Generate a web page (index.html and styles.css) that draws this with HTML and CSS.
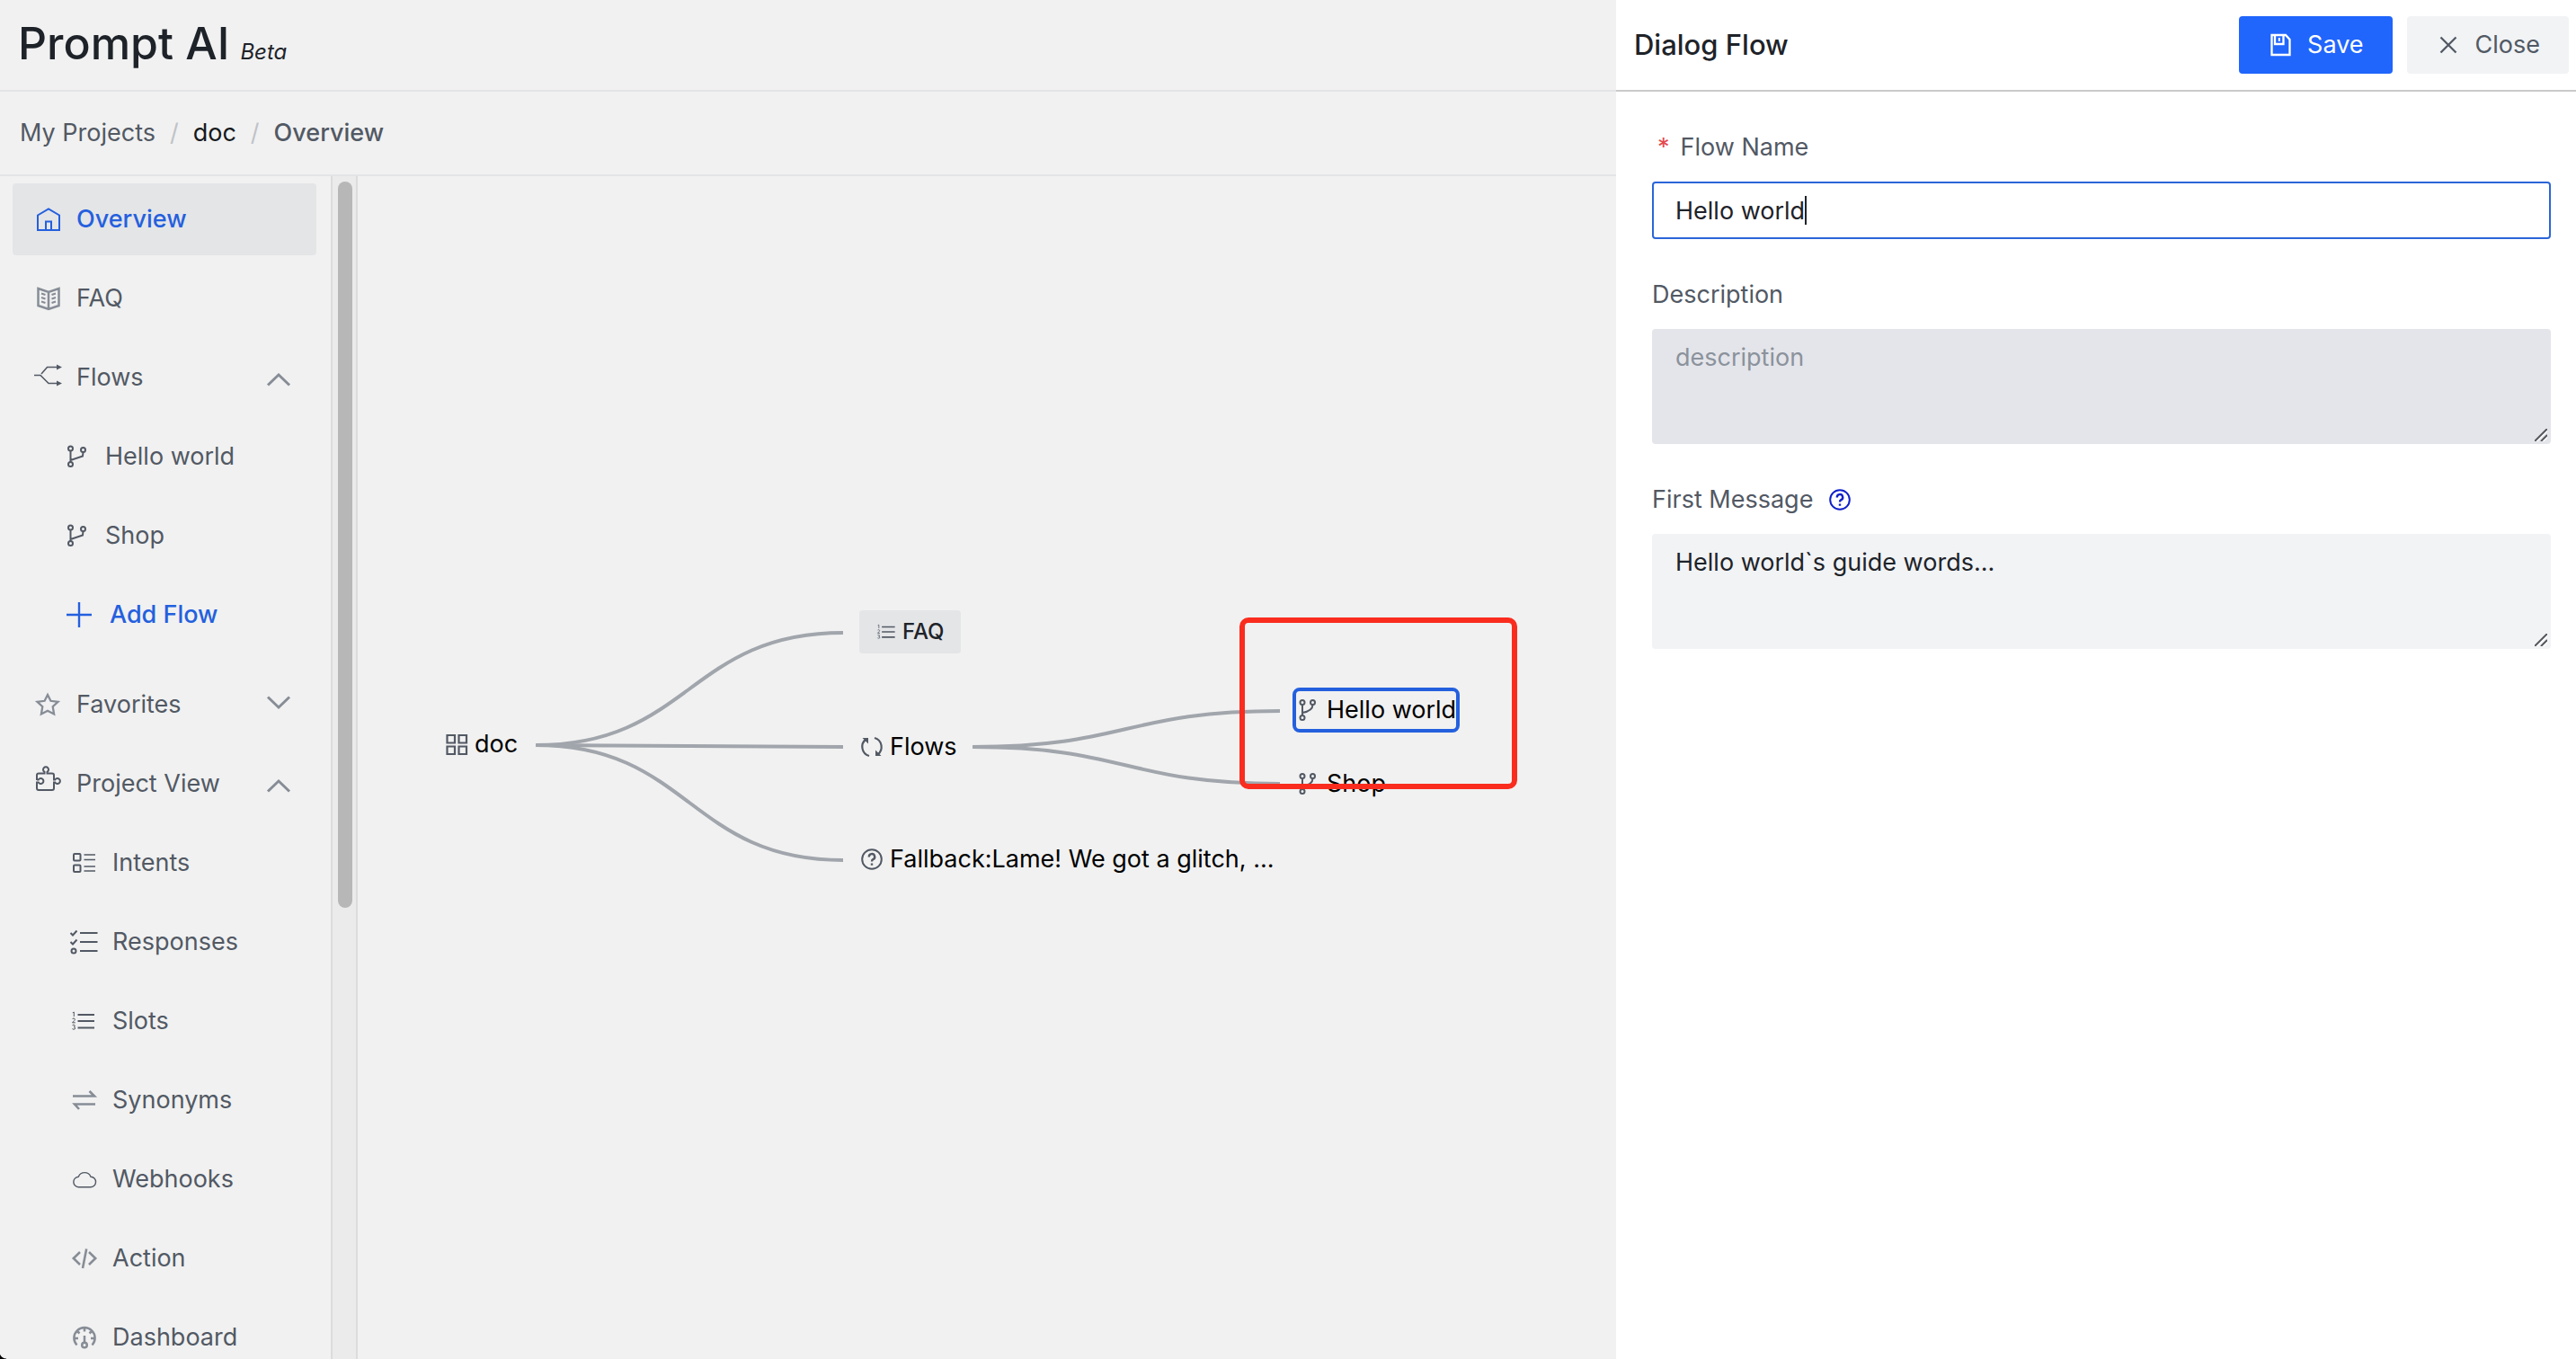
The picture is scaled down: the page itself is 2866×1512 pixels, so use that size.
FILE: index.html
```html
<!DOCTYPE html>
<html lang="en">
<head>
<meta charset="utf-8">
<title>Prompt AI - Overview</title>
<link rel="stylesheet" href="styles.css">
</head>
<body>
<svg class="sprite" aria-hidden="true">
  <symbol id="i-home" viewBox="0 0 28 28"><path d="M2 9.500 14 2.500 26 9.500V26H2Z M11 26V16.500h6V26"/></symbol>
  <symbol id="i-book" viewBox="0 0 28 28"><path stroke-width="2.500" d="M2.500 3 14 7 25.500 3V22L14 26 2.500 22Z M14 7V26"/><path stroke-width="2.200" d="M6 8.500l4.500 1.500 M6 13l4.500 1.500 M6 17.500l4.500 1.500 M22 8.500l-4.500 1.500 M22 13l-4.500 1.500 M22 17.500l-4.500 1.500"/></symbol>
  <symbol id="i-split" viewBox="0 0 28 28"><path stroke-width="1.600" d="M-2 11.500H5L14 20.500H23 M6 10 12.500 2.500H23"/><path class="solid" d="M23-.5 29 2.500 23 5.500Z M23 17.500 29 20.500 23 23.500Z"/></symbol>
  <symbol id="i-branch" viewBox="0 0 28 28"><circle cx="6.500" cy="5" r="2.500"/><circle cx="20.500" cy="6.500" r="2.500"/><circle cx="6.500" cy="22.500" r="2.500"/><path d="M6.500 7.500V20 M6.500 18 20 13.500 20.500 9"/></symbol>
  <symbol id="i-plus" viewBox="0 0 28 28"><path stroke-width="2.400" d="M14 0V28 M0 14H28"/></symbol>
  <symbol id="i-star" viewBox="0 0 28 28"><path stroke-width="2.300" d="m13 3 3.400 6.800 8.100 1-5.800 5.300 1.400 8.400L13 20.700 5.900 24.500l1.400-8.400L1.500 10.800l8.100-1Z"/></symbol>
  <symbol id="i-puzzle" viewBox="0 0 28 28"><path d="M1 10V4.500Q1 2.500 3 2.500H9.500V.8A3 3 0 1 1 12.500.8V2.500H18Q20 2.500 20 4.500V9.500H21.300A3 3 0 1 1 21.300 12.500H20V19Q20 21 18 21H3Q1 21 1 19V12.500H2.800A3 3 0 1 0 2.800 9.500H1"/></symbol>
  <symbol id="i-blocks" viewBox="0 0 28 28"><rect x="2" y="4" width="7.500" height="7.500" rx="1"/><rect x="2" y="16.500" width="7.500" height="7.500" rx="1"/><path stroke-width="1.600" d="M13.500 5H26 M13.500 10.500H26 M13.500 18H26 M13.500 23H26"/></symbol>
  <symbol id="i-checks" viewBox="0 0 28 28"><path d="M-1.500 4 1 6.500 5.500 1.500 M-1.500 14 1 16.500 5.500 11.500 M9 4H28.500 M9 14H28.500 M9 24H28.500"/><circle cx="2" cy="24" r="2.500"/></symbol>
  <symbol id="i-numbers" viewBox="0 0 28 28"><path d="M6.500 7H25 M6.500 14H25 M6.500 21.500H25"/><path class="fine" d="M.8 4.800 2.300 4V9 M.5 11.800Q.8 11 2 11T3.400 12.300Q3.400 13 .5 15.800H3.800 M.5 18.800Q.8 18.200 2 18.200T3.300 19.300 2 20.500Q3.600 20.500 3.600 21.900T2 23.200.5 22.500"/></symbol>
  <symbol id="i-swap" viewBox="0 0 28 28"><path stroke-width="2.600" d="M1 9.500H25L19.500 4 M26 18.500H3L8 24"/></symbol>
  <symbol id="i-cloud" viewBox="0 0 28 28"><path stroke-width="1.400" d="M8 22.800A5.800 5.800 0 0 1 7.300 11.200 7.400 7.400 0 0 1 21 11.200 5.800 5.800 0 0 1 20.500 22.800Z"/></symbol>
  <symbol id="i-code" viewBox="0 0 28 28"><path stroke-width="2.600" d="M9 7 1.800 14 9 21 M19 7 26.200 14 19 21 M16.200 3.500 12 25"/></symbol>
  <symbol id="i-gauge" viewBox="0 0 28 28"><path stroke-width="2.500" d="M5.500 22.500A11.600 11.600 0 1 1 22.500 22.500 M14 2.500V7.500 M5.500 6.500 8.500 9.500 M22.500 6.500 19.500 9.500 M2.500 15H7 M21 15H25.500 M14 12V20"/><circle stroke-width="2.500" cx="14" cy="22.500" r="2.800"/></symbol>
  <symbol id="i-up" viewBox="0 0 28 28"><path d="M2 22.500 14 11 26 22.500"/></symbol>
  <symbol id="i-down" viewBox="0 0 28 28"><path d="M2 5.500 14 17 26 5.500"/></symbol>
  <symbol id="i-save" viewBox="0 0 28 28"><path stroke-width="2.300" d="M4.500 3H20L24.500 8V25H4.500Z M8 3V13H17.500V3"/><path d="M12.800 6V10"/></symbol>
  <symbol id="i-close" viewBox="0 0 28 28"><path stroke-width="2.300" d="M5.500 5.500 22.500 22.500 M22.500 5.500 5.500 22.500"/></symbol>
  <symbol id="i-help" viewBox="0 0 28 28"><circle cx="14" cy="14" r="10.800"/><path stroke-width="2.400" d="M10.800 11.500A3.200 3.200 0 1 1 15.300 14.200Q14 14.800 14 16.500 M14 18.500V20.800"/></symbol>
  <symbol id="i-grid" viewBox="0 0 28 28"><path stroke-width="2.200" d="M3.500 4H12V12.500H3.500Z M16.500 4H25V12.500H16.500Z M3.500 16.500H12V25H3.500Z M16.500 16.500H25V25H16.500Z"/></symbol>
  <symbol id="i-cycle" viewBox="0 0 28 28"><path stroke-width="2.200" d="M11 24A10.500 10.500 0 0 1 7.500 5.500 M17 4A10.500 10.500 0 0 1 20.500 22.500"/><path class="solid" d="M3.500 4H10V10.500Z M24.500 24H18V17.500Z"/></symbol>
  <symbol id="i-fork" viewBox="0 0 28 28"><circle cx="7" cy="5.500" r="2.500"/><circle cx="18.500" cy="5.500" r="2.500"/><circle cx="7" cy="22.500" r="2.500"/><path d="M7 8V20 M7 17Q18.500 15 18.500 8"/></symbol>
</svg>

<div class="app">
  <div class="workspace">
    <header class="topbar">
      <span class="brand">Prompt AI</span><em class="beta">Beta</em>
    </header>
    <nav class="crumbs" aria-label="Breadcrumb">
      <a href="#projects">My Projects</a><span class="slash">/</span>
      <a class="strong" href="#doc">doc</a><span class="slash">/</span>
      <span class="current">Overview</span>
    </nav>
    <div class="body">
      <nav class="sidebar" aria-label="Project">
        <a class="item active" href="#overview"><svg class="icon"><use href="#i-home"/></svg>Overview</a>
        <a class="item" href="#faq"><svg class="icon soft"><use href="#i-book"/></svg>FAQ</a>
        <button class="item" type="button" aria-expanded="true"><svg class="icon"><use href="#i-split"/></svg>Flows<svg class="icon soft chevron"><use href="#i-up"/></svg></button>
        <a class="item flow" href="#hello"><svg class="icon"><use href="#i-branch"/></svg>Hello world</a>
        <a class="item flow" href="#shop"><svg class="icon"><use href="#i-branch"/></svg>Shop</a>
        <button class="item flow add" type="button"><svg class="icon"><use href="#i-plus"/></svg>Add Flow</button>
        <button class="item" type="button" aria-expanded="false"><svg class="icon soft"><use href="#i-star"/></svg>Favorites<svg class="icon soft chevron"><use href="#i-down"/></svg></button>
        <button class="item" type="button" aria-expanded="true"><svg class="icon"><use href="#i-puzzle"/></svg>Project View<svg class="icon soft chevron"><use href="#i-up"/></svg></button>
        <a class="item view" href="#intents"><svg class="icon"><use href="#i-blocks"/></svg>Intents</a>
        <a class="item view" href="#responses"><svg class="icon"><use href="#i-checks"/></svg>Responses</a>
        <a class="item view" href="#slots"><svg class="icon"><use href="#i-numbers"/></svg>Slots</a>
        <a class="item view" href="#synonyms"><svg class="icon soft"><use href="#i-swap"/></svg>Synonyms</a>
        <a class="item view" href="#webhooks"><svg class="icon"><use href="#i-cloud"/></svg>Webhooks</a>
        <a class="item view" href="#action"><svg class="icon soft"><use href="#i-code"/></svg>Action</a>
        <a class="item view" href="#dashboard"><svg class="icon soft"><use href="#i-gauge"/></svg>Dashboard</a>
      </nav>
      <div class="scrollbar"><div class="thumb"></div></div>
      <main class="canvas">
        <svg class="links" aria-hidden="true">
          <path d="M198 633C369 633 369 508 540 508"/>
          <path d="M198 633C369 633 369 635 540 635"/>
          <path d="M198 633C369 633 369 761 540 761"/>
          <path d="M684 635C855 635 855 595 1026 595"/>
          <path d="M684 635C855 635 855 676 1026 676"/>
        </svg>
        <div class="node doc"><svg class="icon"><use href="#i-grid"/></svg>doc</div>
        <div class="node faq"><svg class="icon"><use href="#i-numbers"/></svg>FAQ</div>
        <div class="node flows"><svg class="icon"><use href="#i-cycle"/></svg>Flows</div>
        <div class="node fallback"><svg class="icon"><use href="#i-help"/></svg>Fallback:Lame! We got a glitch, ...</div>
        <div class="node hello"><svg class="icon"><use href="#i-fork"/></svg>Hello world</div>
        <div class="node shop"><svg class="icon"><use href="#i-fork"/></svg>Shop</div>
        <div class="marker"></div>
      </main>
    </div>
  </div>

  <aside class="drawer">
    <header class="drawer-head">
      <h1 class="title">Dialog Flow</h1>
      <button class="btn primary" type="button"><svg class="icon"><use href="#i-save"/></svg>Save</button>
      <button class="btn" type="button"><svg class="icon"><use href="#i-close"/></svg>Close</button>
    </header>
    <form class="form">
      <label class="label required" for="name"><span class="star">*</span>Flow Name</label>
      <div class="field"><input class="control input" id="name" type="text" value="Hello world"><span class="caret"></span></div>
      <label class="label" for="desc">Description</label>
      <div class="field">
        <textarea class="control area muted" id="desc" placeholder="description"></textarea>
        <svg class="grip" viewBox="0 0 14 14"><path class="shine" d="M2 14 14 2 M9 14 14 9"/><path d="M0 14 14 0 M7 14 14 7"/></svg>
      </div>
      <label class="label" for="first">First Message<svg class="icon help"><use href="#i-help"/></svg></label>
      <div class="field">
        <textarea class="control area" id="first">Hello world`s guide words...</textarea>
        <svg class="grip" viewBox="0 0 14 14"><path class="shine" d="M2 14 14 2 M9 14 14 9"/><path d="M0 14 14 0 M7 14 14 7"/></svg>
      </div>
    </form>
  </aside>
</div>
<div class="corner"></div>
</body>
</html>
```
FILE: styles.css
```css
* { box-sizing: border-box; }

body {
  margin: 0;
  height: 100vh;
  overflow: hidden;
  background: #f1f1f1;
  color: #525964;
  font: 27px/44px Inter, "Liberation Sans", sans-serif;
}

a { color: inherit; text-decoration: none; }
button { font: inherit; color: inherit; border: 0; background: none; cursor: pointer; }

.sprite { display: none; }

.icon {
  flex: none;
  width: 28px;
  height: 28px;
  overflow: visible;
  fill: none;
  stroke: currentColor;
  stroke-width: 2;
}
symbol { overflow: visible; }
.soft { color: #878d96; }
.solid { fill: currentColor; stroke: none; }
.fine { stroke-width: 1; }

.app { display: flex; height: 100%; }
.workspace { flex: 1; min-width: 0; display: flex; flex-direction: column; }

.topbar {
  flex: none;
  display: flex;
  align-items: baseline;
  gap: 12px;
  height: 102px;
  padding: 16px 20px;
  border-bottom: 2px solid #e3e4e6;
  color: #1e2329;
}
.brand { font-size: 50px; line-height: 64px; font-weight: 500; }
.beta { font-size: 24px; }

.crumbs {
  flex: none;
  display: flex;
  align-items: center;
  height: 94px;
  padding: 0 22px;
  border-bottom: 2px solid #e3e4e6;
}
.slash { margin: 0 16px; color: #bfc3c8; }
.strong { color: #16191d; }
.current { font-weight: 500; }

.body { flex: 1; min-height: 0; display: flex; }

.sidebar {
  flex: 0 0 368px;
  display: flex;
  flex-direction: column;
  gap: 8px;
  padding: 8px 16px 8px 14px;
  overflow: hidden;
}
.item {
  flex: none;
  display: flex;
  align-items: center;
  gap: 17px;
  height: 80px;
  padding: 0 28px 0 26px;
  border-radius: 4px;
}
.active { background: #e4e5e7; color: #2460de; font-weight: 500; }
.flow { padding-left: 58px; }
.add { gap: 20px; padding-left: 60px; margin-bottom: 12px; color: #2460de; font-weight: 500; }
.view { padding-left: 66px; }
.chevron { margin-left: auto; stroke-width: 3; }

.scrollbar {
  flex: 0 0 30px;
  padding: 6px 4px 6px 6px;
  border: solid #dcdcdc;
  border-width: 0 2px;
  background: #ebebeb;
}
.thumb { width: 16px; height: 62%; border-radius: 8px; background: #b7b7b7; }

.canvas { position: relative; flex: 1; min-width: 0; overflow: hidden; }
.links { width: 100%; height: 100%; fill: none; stroke: #a1a5ac; stroke-width: 4; }

.node {
  position: absolute;
  display: flex;
  align-items: center;
  gap: 6px;
  height: 48px;
  white-space: nowrap;
  color: #000;
}
.node .icon { color: #525964; }
.doc { left: 96px; top: 608px; }
.faq {
  left: 558px;
  top: 483px;
  padding: 0 18px 0 20px;
  border-radius: 4px;
  background: #e4e5e7;
  color: #1e2329;
  font-size: 24px;
  font-weight: 500;
}
.faq .icon { width: 22px; height: 22px; }
.flows { left: 558px; top: 611px; }
.fallback { left: 558px; top: 736px; }
.hello, .shop {
  left: 1040px;
  height: 50px;
  border: 4px solid transparent;
  border-radius: 8px;
}
.hello { top: 569px; border-color: #2460de; }
.shop { top: 651px; }
.marker {
  position: absolute;
  left: 981px;
  top: 491px;
  width: 309px;
  height: 191px;
  border: 6px solid #fa2c1e;
  border-radius: 10px;
}

.drawer { flex: 0 0 1068px; background: #fff; }
.drawer-head {
  display: flex;
  align-items: center;
  gap: 16px;
  height: 102px;
  padding: 0 8px 0 20px;
  border-bottom: 2px solid #cacaca;
}
.title { flex: 1; margin: 0; color: #1e2329; font-size: 31px; font-weight: 500; }
.btn {
  display: flex;
  align-items: center;
  gap: 16px;
  height: 64px;
  padding: 0 32px;
  border-radius: 4px;
  background: #f1f3f5;
}
.primary { background: #2065fc; color: #fff; }

.form { padding: 40px 28px 40px 40px; }
.label { display: flex; align-items: center; margin-bottom: 16px; }
.required { gap: 12px; padding-left: 6px; }
.star { color: #e5484d; }
.help { margin-left: 16px; color: #1020c8; }
.field { position: relative; margin-bottom: 40px; }
.control {
  display: block;
  width: 100%;
  margin: 0;
  border: 2px solid transparent;
  border-radius: 4px;
  background: #f1f3f5;
  color: #1e2329;
  font: inherit;
  outline: 0;
  resize: none;
}
.input { height: 64px; padding: 0 24px; border-color: #2a66d8; background: #fff; }
.area { height: 128px; padding: 8px 24px; }
.muted { background: #e4e5ea; }
.muted::placeholder { color: #8b929c; opacity: 1; }
.caret { position: absolute; left: 170px; top: 16px; width: 2px; height: 32px; background: #1e2329; }
.grip {
  position: absolute;
  right: 4px;
  bottom: 3px;
  width: 14px;
  height: 14px;
  stroke: #55585d;
  stroke-width: 2;
}
.shine { stroke: #fff; }

/* rounded window edge */
.corner {
  position: absolute;
  left: 0;
  bottom: 0;
  width: 7px;
  height: 8px;
  background: radial-gradient(circle at 100% 0, transparent 7px, #000 8px);
}
```
